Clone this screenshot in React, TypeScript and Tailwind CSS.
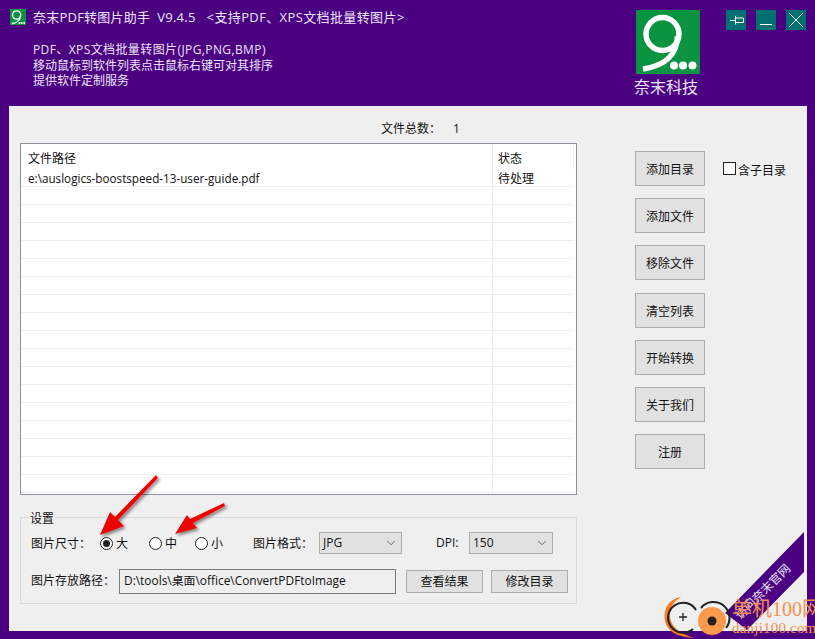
import React from 'react';
import { ChevronDown } from 'lucide-react';

const font = "font-['Open_Sans','Noto_Sans_CJK_SC',sans-serif]";

const actions = ['添加目录', '添加文件', '移除文件', '清空列表', '开始转换', '关于我们', '注册'];
const emptyRows = Array.from({ length: 17 });

const LogoNine = ({ className }: { className: string }) => (
  <svg viewBox="0 0 64 64" className={className}>
    <rect width="64" height="64" fill="#0a9340" />
    <circle cx="26.5" cy="24" r="16.5" fill="none" stroke="#fff" strokeWidth="5.5" />
    <path d="M41.5 26 C41 42 33 55 7 59" fill="none" stroke="#fff" strokeWidth="5.5" />
    <circle cx="38" cy="55.5" r="4" fill="#fff" />
    <circle cx="47" cy="55.5" r="4" fill="#fff" />
    <circle cx="56.5" cy="55.5" r="4" fill="#fff" />
  </svg>
);

const WinButton = ({ children }: { children: React.ReactNode }) => (
  <div className="w-5 h-5 bg-[#007070] flex items-center justify-center">
    <svg viewBox="0 0 20 20" className="w-5 h-5" fill="none" stroke="#fff" strokeWidth="1">
      {children}
    </svg>
  </div>
);

const Radio = ({ label, checked, className }: { label: string; checked?: boolean; className: string }) => (
  <div className={`flex items-center ${className}`}>
    <div className="w-[13px] h-[13px] rounded-full border border-[#222] bg-white flex items-center justify-center">
      {checked && <div className="w-[7px] h-[7px] rounded-full bg-[#222]" />}
    </div>
    <span className="ml-[3px] mt-[2px]">{label}</span>
  </div>
);

const Dropdown = ({ value, className }: { value: string; className: string }) => (
  <div className={`h-[22px] bg-[#e1e1e1] border border-[#adadad] flex items-center justify-between pl-[3px] pr-[3px] ${className}`}>
    <span>{value}</span>
    <ChevronDown className="w-[14px] h-[14px] text-[#555]" strokeWidth={1.5} />
  </div>
);

export default function App() {
  return (
    <div className={`relative w-[815px] h-[639px] overflow-hidden bg-[#4b0082] flex flex-col text-[12px] leading-[16px] text-[#111] ${font}`}>
      {/* Title bar */}
      <div className="h-[106px] flex text-[#ece6fa]">
        <div className="w-[636px] pl-[10px] pt-[9px]">
          <div className="flex items-center h-4 text-[13px] whitespace-pre">
            <LogoNine className="w-4 h-4" />
            <span className="ml-[7px] tracking-[0.22px]">奈末PDF转图片助手  V9.4.5</span>
            <span className="ml-[11px] tracking-[0.38px]">&lt;支持PDF、XPS文档批量转图片&gt;</span>
          </div>
          <div className="ml-[23px] mt-[17px] text-[12px] leading-[15.5px]">
            <div className="tracking-[0.4px]">PDF、XPS文档批量转图片(JPG,PNG,BMP)</div>
            <div>移动鼠标到软件列表点击鼠标右键可对其排序</div>
            <div>提供软件定制服务</div>
          </div>
        </div>
        <div className="w-16 pt-[10px] flex flex-col items-center">
          <LogoNine className="w-16 h-16 shrink-0" />
          <span className="text-[16px] leading-[20px] mt-[3px] -ml-[4px] whitespace-nowrap">奈末科技</span>
        </div>
        <div className="ml-[26px] pt-[10px] flex gap-[10px] h-fit">
          <WinButton>
            <path d="M4 10.5h5M9.5 6v8.5M9.5 8h8v4.5h-8" />
          </WinButton>
          <WinButton>
            <path d="M4 14.5h12" />
          </WinButton>
          <WinButton>
            <path d="M3.5 3.5l13 13M16.5 3.5l-13 13" />
          </WinButton>
        </div>
      </div>

      {/* Main panel */}
      <div className="ml-[9px] w-[798px] h-[525px] bg-[#efefef] flex">
        <div className="ml-[11px] w-[557px] flex flex-col">
          <div className="h-[37px] pt-[15px] pl-[361px] flex">
            <span>文件总数：</span>
            <span className="ml-[12px]">1</span>
          </div>

          <div className="h-[352px] bg-white border border-[#8e8f9b] overflow-hidden">
            <div className="flex h-[25px]">
              <div className="w-[472px] pl-[7px] pt-[7px] border-r border-[#eeeeee]">文件路径</div>
              <div className="w-[81px] pl-[5px] pt-[7px] border-r border-[#eeeeee]">状态</div>
            </div>
            <div className="flex w-[553px] h-[18px] border-b border-[#eeeeee]">
              <div className="w-[472px] pl-[7px] pt-px text-[11.7px] border-r border-[#eeeeee]">e:\auslogics-boostspeed-13-user-guide.pdf</div>
              <div className="w-[81px] pl-[5px] pt-[2px]">待处理</div>
            </div>
            {emptyRows.map((_, i) => (
              <div key={i} className="flex w-[553px] h-[18px] border-b border-[#eeeeee]">
                <div className="w-[472px] border-r border-[#eeeeee]" />
              </div>
            ))}
          </div>

          {/* Settings group */}
          <div className="relative mt-[22px] h-[87px] border border-[#dcdcdc]">
            <span className="absolute left-2 -top-[7px] px-px bg-[#efefef]">设置</span>
            <div className="flex items-center h-[22px] mt-[14px] pl-[10px]">
              <span className="w-[69px] mt-[1px]">图片尺寸：</span>
              <Radio label="大" checked className="w-[49px]" />
              <Radio label="中" className="w-[46px]" />
              <Radio label="小" className="w-[58px]" />
              <span className="w-[66px] mt-[1px]">图片格式：</span>
              <Dropdown value="JPG" className="w-[83px]" />
              <span className="ml-[34px] w-[33px] -mt-[1px]">DPI:</span>
              <Dropdown value="150" className="w-[84px]" />
            </div>
            <div className="flex items-center h-6 mt-[15px] pl-[10px]">
              <span className="w-[88px]">图片存放路径：</span>
              <div className="w-[277px] h-[25px] bg-[#efefef] border border-[#7a7a7a] pl-[4px] pt-[2px] text-[11.9px]">D:\tools\桌面\office\ConvertPDFtoImage</div>
              <button className="ml-[10px] w-[77px] h-[23px] pt-px bg-[#e1e1e1] border border-[#adadad]">查看结果</button>
              <button className="ml-2 w-[77px] h-[23px] pt-px bg-[#e1e1e1] border border-[#adadad]">修改目录</button>
            </div>
          </div>
        </div>

        {/* Actions */}
        <div className="ml-[58px] pt-[45px] flex flex-col gap-3 w-[70px]">
          {actions.map((a, i) => (
            <button key={a} className={`h-[35px] pt-[2px] bg-[#e1e1e1] border border-[#adadad] ${i === 3 ? 'mt-px' : ''}`}>{a}</button>
          ))}
        </div>
        <div className="ml-[18px] pt-[56px] flex items-start">
          <div className="w-[13px] h-[13px] bg-white border border-[#222]" />
          <span className="ml-[2px] mt-px">含子目录</span>
        </div>
      </div>

      {/* Corner ribbon */}
      <div className="absolute left-0 top-0 w-[815px] h-[639px] pointer-events-none">
        <svg viewBox="0 0 815 639" className="absolute inset-0 w-[815px] h-[639px]">
          <polygon points="804,532 804,572 747,630 725,613" fill="#4b0082" />
        </svg>
        <span className="absolute left-[723px] top-[584px] w-20 text-center text-[12px] text-[#e8e0fa] -rotate-45 whitespace-nowrap">访问奈末官网</span>

        {/* Red arrows */}
        <svg viewBox="0 0 815 639" className="absolute inset-0 w-[815px] h-[639px]">
          <defs>
            <filter id="sh" x="-20%" y="-20%" width="150%" height="150%">
              <feDropShadow dx="2" dy="2" stdDeviation="1.5" floodColor="#000" floodOpacity="0.45" />
            </filter>
          </defs>
          <polygon points="156,475 158,478 118,520 124,526 100,535 110,512 115,517" fill="#f00000" filter="url(#sh)" />
          <polygon points="224,503 225,506 193,523 197,528 175,534 187,515 190,519" fill="#f00000" filter="url(#sh)" />
        </svg>

        {/* Site watermark */}
        <svg viewBox="0 0 815 639" className="absolute inset-0 w-[815px] h-[639px]">
          <path d="M681 597 C667 599 662 612 666 624 C669 632 678 637 694 638 C681 634 672 628 670 618 C669 608 673 602 681 597Z" fill="#f47a1f" />
          <path d="M696 610 A15 15 0 1 0 693 629" fill="none" stroke="#222" strokeWidth="2" />
          <path d="M679 617h8M683 613v8" stroke="#222" strokeWidth="1.3" />
          <circle cx="712" cy="621" r="14" fill="#fb9a4c" />
          <path d="M701 608 A15.5 15.5 0 0 1 726 628" fill="none" stroke="#222" strokeWidth="2" />
          <circle cx="712" cy="621" r="4.5" fill="#222" />
        </svg>
        <span className="absolute left-[732px] top-[597px] text-[20px] leading-[24px] text-[#f5904c] whitespace-nowrap font-['Liberation_Serif','Noto_Sans_CJK_SC',serif]">单机100网</span>
        <span className="absolute left-[732px] top-[620px] text-[15px] leading-[16px] tracking-[0.2px] text-[#f5904c] whitespace-nowrap font-['Liberation_Serif',serif]">danji100.com</span>
      </div>
    </div>
  );
}
